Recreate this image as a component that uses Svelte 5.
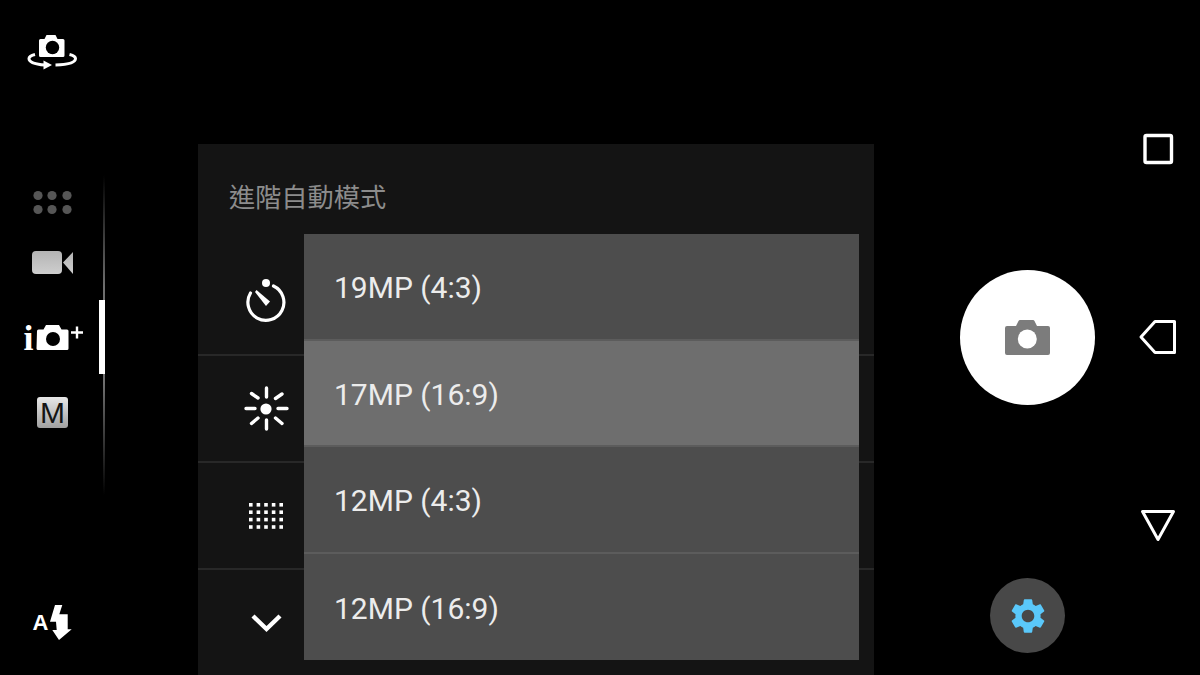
<script>
  // resolution options shown in the open dropdown
  const sizes = [
    { label: '19MP (4:3)', active: false },
    { label: '17MP (16:9)', active: true },
    { label: '12MP (4:3)', active: false },
    { label: '12MP (16:9)', active: false }
  ];

  const gridDots = [];
  for (let r = 0; r < 4; r++) {
    for (let c = 0; c < 5; c++) {
      gridDots.push({ x: 249 + c * 7.6, y: 503 + r * 7.4 });
    }
  }
</script>

<div class="screen">
  <aside class="rail">
    <svg class="flip" width="60" height="44" viewBox="25 30 60 44">
      <path fill="#fff" d="M39 40.500q0-1.500 1.500-1.500h4l2-4h9l2 4h5.500q1.500 0 1.500 1.500v15q0 1.500-1.500 1.500h-22.500q-1.500 0-1.500-1.500z" />
      <circle cx="52.500" cy="47.500" r="6.700" fill="#000" />
      <path fill="none" stroke="#fff" stroke-width="3" d="M35 54.500q-6 1.500-6 4 0 5.500 16 6.500" />
      <path fill="#fff" d="M43.500 60.500l8.500 4.500-8.500 4.500z" />
      <path fill="none" stroke="#fff" stroke-width="3" d="M55.500 65q20-.5 20-6.500 0-2.500-6-4" />
    </svg>

    <div class="modes">
      <svg class="dots" width="50" height="34" viewBox="28 186 50 34">
        {#each [38, 52, 67] as x}
          <circle cx={x} cy="195.500" r="4.600" fill="#565656" />
          <circle cx={x} cy="209.500" r="4.600" fill="#565656" />
        {/each}
      </svg>
      <svg class="video" width="50" height="34" viewBox="28 245 50 34">
        <defs>
          <linearGradient id="vid" x1="0" y1="0" x2="0" y2="1">
            <stop offset="0" stop-color="#b4b4b4" />
            <stop offset="1" stop-color="#cecece" />
          </linearGradient>
        </defs>
        <rect x="32" y="251" width="30" height="23" rx="4" fill="url(#vid)" />
        <path fill="url(#vid)" d="M63 262.500l10-10.500v22z" />
      </svg>
      <svg class="auto" width="64" height="38" viewBox="22 319 64 38">
        <text x="23.500" y="350" class="i-mark">i</text>
        <path fill="#fff" d="M37 331q0-1.500 1.500-1.500h5l2.500-4.500h13l2.500 4.500h5.500q1.500 0 1.500 1.500v17.500q0 1.500-1.500 1.500h-29q-1.500 0-1.500-1.500z" />
        <circle cx="53" cy="339" r="7" fill="#000" />
        <path stroke="#fff" stroke-width="2.400" d="M71 332.500h12M77 326.500v12" />
      </svg>
      <div class="m-badge">M</div>
      <span class="indicator"></span>
    </div>

    <svg class="flash" width="60" height="44" viewBox="25 600 60 44">
      <text x="32.500" y="629.500" class="a-mark">A</text>
      <path fill="#fff" d="M55 605h7.300l-3 9.300h8.400v15h4l-12.700 10.700-6.700-10h4.400l-.7-8.300h-6z" />
    </svg>
  </aside>

  <section class="panel">
    <h2 class="title">進階自動模式</h2>

    <div class="row">
      <svg width="60" height="60" viewBox="236 274 60 60">
        <path fill="none" stroke="#fff" stroke-width="3.200" stroke-linecap="round" d="M273.500 288a18 18 0 1 1-23 7" />
        <circle cx="266" cy="285" r="4" fill="#fff" />
        <path fill="#fff" d="M256.500 292l13.500 11.500-4 4.500-11-14z" />
      </svg>
    </div>
    <div class="row">
      <svg width="60" height="60" viewBox="236 379 60 60">
        <circle cx="266" cy="409" r="5.600" fill="#fff" />
        <path stroke="#fff" stroke-width="3.400" stroke-linecap="round" d="M246 408.500h9M278 408.500h9M266.500 388v9M266.500 420v9M251.500 393.500l6.500 4.500M282 394l-6.500 4.500M251.500 423.500l6.500-5.500M282 423.500l-6.500-5.500" />
      </svg>
    </div>
    <div class="row">
      <svg width="60" height="60" viewBox="236 486 60 60">
        {#each gridDots as d}
          <rect x={d.x} y={d.y} width="3.600" height="3.600" fill="#fff" />
        {/each}
      </svg>
    </div>
    <div class="row last">
      <svg width="60" height="60" viewBox="236 593 60 60">
        <path fill="none" stroke="#fff" stroke-width="4.400" d="M253 615l13.500 13 13.500-13" />
      </svg>
    </div>

    <ul class="dropdown">
      {#each sizes as size}
        <li class:active={size.active}>{size.label}</li>
      {/each}
    </ul>
  </section>

  <div class="controls">
    <button class="shutter" aria-label="shutter">
      <svg width="46" height="36" viewBox="1005 317 46 36">
        <path fill="#7c7c7c" d="M1005 325q0-2 2-2h9l2.500-5q.5-1 1.500-1h13q1 0 1.500 1l2.500 5h11q2 0 2 2v25q0 2-2 2h-41q-2 0-2-2z" />
        <circle cx="1027.300" cy="336" r="9.500" fill="#fff" />
      </svg>
    </button>
    <button class="settings" aria-label="settings">
      <svg width="42" height="42" viewBox="0 0 24 24">
        <path fill="#5ac8fa" d="M19.140 12.940c.04-.3.06-.61.06-.94 0-.32-.02-.64-.07-.94l2.030-1.580c.18-.14.23-.41.12-.61l-1.920-3.320c-.12-.22-.37-.29-.59-.22l-2.390.96c-.5-.38-1.030-.7-1.620-.94l-.36-2.540c-.04-.24-.24-.41-.48-.41h-3.840c-.24 0-.43.17-.47.41l-.36 2.540c-.59.24-1.130.57-1.620.94l-2.390-.96c-.22-.08-.47 0-.59.22L2.740 8.870c-.12.21-.08.47.12.61l2.030 1.580c-.05.3-.09.63-.09.94s.02.64.07.94l-2.030 1.580c-.18.14-.23.41-.12.61l1.920 3.320c.12.22.37.29.59.22l2.390-.96c.5.38 1.030.7 1.620.94l.36 2.540c.05.24.24.41.48.41h3.840c.24 0 .44-.17.47-.41l.36-2.540c.59-.24 1.130-.56 1.620-.94l2.390.96c.22.08.47 0 .59-.22l1.920-3.320c.12-.22.07-.47-.12-.61l-2.010-1.580zM12 15.600c-1.980 0-3.600-1.620-3.600-3.600s1.620-3.600 3.600-3.600 3.600 1.620 3.600 3.600-1.620 3.600-3.600 3.600z" />
      </svg>
    </button>
  </div>

  <nav class="softkeys">
    <svg width="40" height="40" viewBox="1138 130 40 40">
      <rect x="1145" y="135.500" width="26.500" height="27" rx="1.500" fill="none" stroke="#fff" stroke-width="3.400" />
    </svg>
    <svg width="40" height="40" viewBox="1138 318 40 40">
      <path fill="none" stroke="#fff" stroke-width="3" stroke-linejoin="round" d="M1174.500 321.500v31h-19.500l-14-15.500 14-15.500z" />
    </svg>
    <svg width="40" height="40" viewBox="1138 505 40 40">
      <path fill="none" stroke="#fff" stroke-width="3" stroke-linejoin="round" d="M1142.500 510.500h31l-15.500 28z" />
    </svg>
  </nav>
</div>

<style>
  :global(body) {
    margin: 0;
    background: #000;
  }
  .screen {
    display: flex;
    width: 1200px;
    height: 675px;
    overflow: hidden;
    background: #000;
    font-family: Roboto, "Noto Sans CJK TC", sans-serif;
  }
  svg {
    display: block;
    flex: none;
  }

  /* left mode rail */
  .rail {
    width: 198px;
    flex: none;
    display: flex;
    flex-direction: column;
    align-items: flex-start;
    padding-top: 30px;
    box-sizing: border-box;
  }
  .flip {
    margin-left: 25px;
  }
  .modes {
    position: relative;
    width: 105px;
    height: 320px;
    margin-top: 101px;
    padding-top: 11px;
    box-sizing: border-box;
  }
  .modes::after {
    content: "";
    position: absolute;
    left: 103px;
    top: 0;
    bottom: 0;
    width: 2px;
    background: linear-gradient(to bottom, #000, #6f6f6f 35%, #6f6f6f 65%, #000);
  }
  .dots {
    margin-left: 28px;
  }
  .video {
    margin: 25px 0 0 28px;
  }
  .auto {
    margin: 40px 0 0 22px;
  }
  .m-badge {
    width: 31px;
    height: 31px;
    margin: 40px 0 0 37px;
    border-radius: 3px;
    background: linear-gradient(to bottom, #e8e8e8, #a0a0a0);
    color: #141414;
    font: 30px/32px "Liberation Sans", sans-serif;
    text-align: center;
  }
  .indicator {
    position: absolute;
    left: 99px;
    top: 125px;
    width: 6px;
    height: 74px;
    background: #fff;
    z-index: 1;
  }
  .i-mark {
    font: bold 36px "Liberation Serif", serif;
    fill: #fff;
  }
  .a-mark {
    font: bold 22px "Liberation Sans", sans-serif;
    fill: #fff;
  }
  .flash {
    margin: auto 0 31px 25px;
  }

  /* settings panel */
  .panel {
    position: relative;
    width: 676px;
    height: 531px;
    margin-top: 144px;
    flex: none;
    background: #141414;
  }
  .title {
    margin: 0;
    height: 105px;
    padding: 35px 0 0 31px;
    box-sizing: border-box;
    font-size: 26.200px;
    line-height: 34px;
    font-weight: 400;
    color: #8c8c8c;
    font-family: "Noto Sans CJK TC", sans-serif;
  }
  .row {
    height: 107px;
    box-sizing: border-box;
    border-bottom: 2px solid #282828;
    padding-left: 38px;
    display: flex;
    align-items: center;
  }
  .row.last {
    border-bottom: 0;
  }
  .dropdown {
    position: absolute;
    left: 106px;
    top: 90px;
    width: 555px;
    margin: 0;
    padding: 0;
    list-style: none;
    color: #ececec;
    font-size: 30px;
  }
  .dropdown li {
    height: 106.500px;
    box-sizing: border-box;
    padding: 3px 0 0 30px;
    display: flex;
    align-items: center;
    background: #4d4d4d;
    border-bottom: 2px solid #5c5c5c;
  }
  .dropdown li:last-child {
    border-bottom: 0;
  }
  .dropdown li.active {
    background: #6e6e6e;
    border-bottom-color: #5c5c5c;
  }

  /* shutter and settings buttons */
  .controls {
    width: 135px;
    margin-left: 86px;
    flex: none;
    display: flex;
    flex-direction: column;
    align-items: center;
    padding-top: 270px;
    box-sizing: border-box;
  }
  button {
    border: 0;
    padding: 0;
    display: flex;
    align-items: center;
    justify-content: center;
    border-radius: 50%;
  }
  .shutter {
    width: 135px;
    height: 135px;
    background: #fff;
  }
  .settings {
    width: 75px;
    height: 75px;
    margin-top: 173px;
    background: #484848;
  }

  /* android soft keys */
  .softkeys {
    margin-left: 43px;
    width: 40px;
    flex: none;
    display: flex;
    flex-direction: column;
    padding-top: 130px;
    box-sizing: border-box;
  }
  .softkeys svg + svg {
    margin-top: 148px;
  }
</style>
